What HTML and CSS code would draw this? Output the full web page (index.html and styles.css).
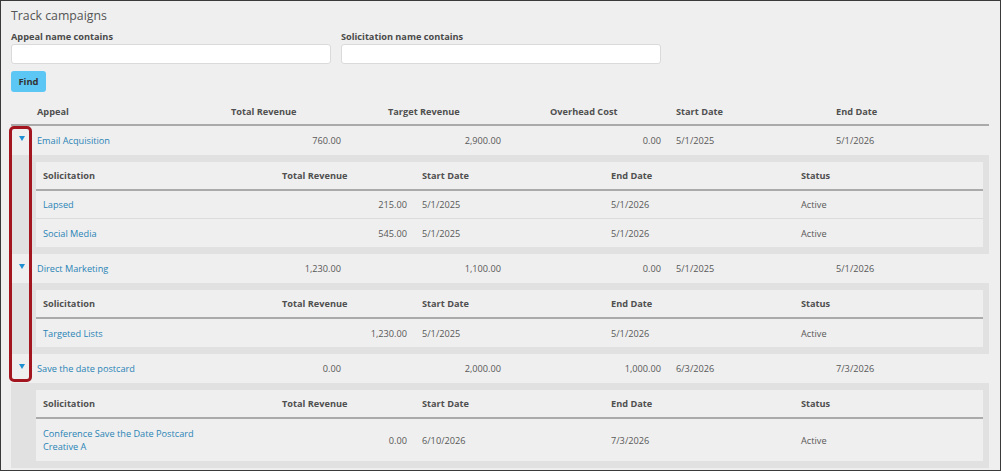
FILE: index.html
```html
<!DOCTYPE html>
<html>
<head>
<meta charset="utf-8">
<link rel="stylesheet" href="styles.css">
</head>
<body>
<div class="frame">
  <h1 class="title">Track campaigns</h1>
  <div class="filters">
    <div class="field">
      <label class="label">Appeal name contains</label>
      <div class="input"></div>
    </div>
    <div class="field">
      <label class="label">Solicitation name contains</label>
      <div class="input"></div>
    </div>
  </div>
  <button class="find">Find</button>

  <div class="table">
    <div class="mrow mhead">
      <div></div>
      <div class="th">Appeal</div>
      <div class="th">Total Revenue</div>
      <div class="th">Target Revenue</div>
      <div class="th">Overhead Cost</div>
      <div class="th">Start Date</div>
      <div class="th">End Date</div>
    </div>

    <div class="mrow">
      <div class="caret"><span class="tri"></span></div>
      <div class="td"><a class="link">Email Acquisition</a></div>
      <div class="td num n1">760.00</div>
      <div class="td num n2">2,900.00</div>
      <div class="td num n3">0.00</div>
      <div class="td">5/1/2025</div>
      <div class="td">5/1/2026</div>
    </div>
    <div class="nest">
      <div class="sub">
        <div class="srow shead">
          <div class="th first">Solicitation</div>
          <div class="th">Total Revenue</div>
          <div class="th">Start Date</div>
          <div class="th">End Date</div>
          <div class="th">Status</div>
        </div>
        <div class="srow sep">
          <div class="td first"><a class="link">Lapsed</a></div>
          <div class="td num">215.00</div>
          <div class="td">5/1/2025</div>
          <div class="td">5/1/2026</div>
          <div class="td">Active</div>
        </div>
        <div class="srow">
          <div class="td first"><a class="link">Social Media</a></div>
          <div class="td num">545.00</div>
          <div class="td">5/1/2025</div>
          <div class="td">5/1/2026</div>
          <div class="td">Active</div>
        </div>
      </div>
    </div>

    <div class="mrow">
      <div class="caret"><span class="tri"></span></div>
      <div class="td"><a class="link">Direct Marketing</a></div>
      <div class="td num n1">1,230.00</div>
      <div class="td num n2">1,100.00</div>
      <div class="td num n3">0.00</div>
      <div class="td">5/1/2025</div>
      <div class="td">5/1/2026</div>
    </div>
    <div class="nest">
      <div class="sub">
        <div class="srow shead">
          <div class="th first">Solicitation</div>
          <div class="th">Total Revenue</div>
          <div class="th">Start Date</div>
          <div class="th">End Date</div>
          <div class="th">Status</div>
        </div>
        <div class="srow">
          <div class="td first"><a class="link">Targeted Lists</a></div>
          <div class="td num">1,230.00</div>
          <div class="td">5/1/2025</div>
          <div class="td">5/1/2026</div>
          <div class="td">Active</div>
        </div>
      </div>
    </div>

    <div class="mrow">
      <div class="caret"><span class="tri"></span></div>
      <div class="td"><a class="link">Save the date postcard</a></div>
      <div class="td num n1">0.00</div>
      <div class="td num n2">2,000.00</div>
      <div class="td num n3">1,000.00</div>
      <div class="td">6/3/2026</div>
      <div class="td">7/3/2026</div>
    </div>
    <div class="nest">
      <div class="sub">
        <div class="srow shead">
          <div class="th first">Solicitation</div>
          <div class="th">Total Revenue</div>
          <div class="th">Start Date</div>
          <div class="th">End Date</div>
          <div class="th">Status</div>
        </div>
        <div class="srow tall">
          <div class="td first"><a class="link wrap">Conference Save the Date Postcard Creative A</a></div>
          <div class="td num">0.00</div>
          <div class="td">6/10/2026</div>
          <div class="td">7/3/2026</div>
          <div class="td">Active</div>
        </div>
      </div>
    </div>
  </div>

  <div class="annot"></div>
</div>
</body>
</html>
```
FILE: styles.css
```css
* { box-sizing: border-box; }
html, body { margin: 0; padding: 0; }
body {
  font-family: "Open Sans", "Liberation Sans", sans-serif;
  font-size: 9.2px;
  color: #555;
  background: #fff;
}
.frame {
  position: relative;
  width: 1001px;
  height: 471px;
  border: 1px solid #3a3a3a;
  background: #efefef;
  padding: 5px 11px 0 10px;
  overflow: hidden;
}
.title {
  margin: 0;
  font-size: 12.3px;
  font-weight: normal;
  line-height: 20px;
  color: #555;
}
.filters {
  display: flex;
  gap: 10px;
  margin-top: 4px;
}
.field { display: flex; flex-direction: column; width: 320px; }
.label {
  font-weight: bold;
  line-height: 14px;
  color: #4a4a4a;
}
.input {
  height: 20px;
  background: #fff;
  border: 1px solid #dadada;
  border-radius: 3px;
}
.find {
  display: block;
  margin-top: 7px;
  width: 35px;
  height: 21px;
  padding: 0;
  border: none;
  border-radius: 3px;
  background: #5cc6f4;
  color: #333;
  font-family: inherit;
  font-size: 9.4px;
  font-weight: bold;
}
.table { margin-top: 6px; width: 978px; }
.mrow {
  display: grid;
  grid-template-columns: 21px 194px 157px 162px 126px 160px 1fr;
  height: 29px;
  align-items: center;
  padding-bottom: 1px;
}
.mhead {
  height: 28px;
  padding-bottom: 0;
  border-bottom: 2px solid #aaa;
}
.th { font-weight: bold; color: #505050; padding-left: 5px; }
.td { padding-left: 5px; color: #585858; }
.num { text-align: right; padding-left: 0; }
.n1 { padding-right: 42px; }
.n2 { padding-right: 44px; }
.n3 { padding-right: 10px; }
.link { color: #2a84b6; text-decoration: none; }
.caret { display: flex; justify-content: center; align-items: center; padding-bottom: 3px; }
.tri {
  width: 0; height: 0;
  border-left: 3.5px solid transparent;
  border-right: 3.5px solid transparent;
  border-top: 5px solid #1e8fd2;
}
.nest {
  background: #e1e1e1;
  padding: 7px 6px 7px 25px;
}
.sub { background: #efefef; }
.srow {
  display: grid;
  grid-template-columns: 241px 140px 189px 190px 1fr;
  height: 28px;
  align-items: center;
}
.shead { height: 29px; border-bottom: 2px solid #aaa; }
.srow.sep { border-bottom: 1px solid #dcdcdc; }
.srow .num { padding-right: 10px; }
.first { padding-left: 7px; }
.srow.tall { height: 42px; line-height: 13px; }
.wrap { display: block; max-width: 160px; }
.annot {
  position: absolute;
  left: 8px;
  top: 125px;
  width: 23px;
  height: 256px;
  border: 3px solid #a3161f;
  border-radius: 5px;
}
```
